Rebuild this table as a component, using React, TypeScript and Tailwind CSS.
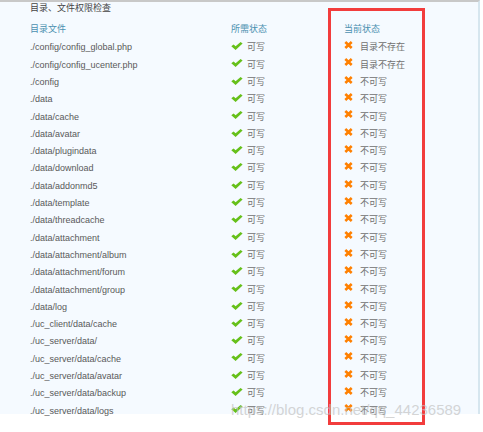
import React from "react";

const ROWS: { path: string; current: string }[] = [
  { path: "./config/config_global.php", current: "目录不存在" },
  { path: "./config/config_ucenter.php", current: "目录不存在" },
  { path: "./config", current: "不可写" },
  { path: "./data", current: "不可写" },
  { path: "./data/cache", current: "不可写" },
  { path: "./data/avatar", current: "不可写" },
  { path: "./data/plugindata", current: "不可写" },
  { path: "./data/download", current: "不可写" },
  { path: "./data/addonmd5", current: "不可写" },
  { path: "./data/template", current: "不可写" },
  { path: "./data/threadcache", current: "不可写" },
  { path: "./data/attachment", current: "不可写" },
  { path: "./data/attachment/album", current: "不可写" },
  { path: "./data/attachment/forum", current: "不可写" },
  { path: "./data/attachment/group", current: "不可写" },
  { path: "./data/log", current: "不可写" },
  { path: "./uc_client/data/cache", current: "不可写" },
  { path: "./uc_server/data/", current: "不可写" },
  { path: "./uc_server/data/cache", current: "不可写" },
  { path: "./uc_server/data/avatar", current: "不可写" },
  { path: "./uc_server/data/backup", current: "不可写" },
  { path: "./uc_server/data/logs", current: "不可写" },
];

const FONT = { fontFamily: '"Liberation Sans", "Noto Sans CJK SC", sans-serif' };

// bold green tick, sits a little above the text line
function Check() {
  return (
    <svg width="12" height="8" viewBox="0 0 12 8" className="shrink-0 -translate-y-[2px]">
      <path d="M0.3 4.2 L2.6 2.4 L4.6 4.3 L9.6 0 L11.6 1.6 L4.6 8 Z" fill="#66c01a" />
    </svg>
  );
}

// chunky orange cross
function Cross() {
  return (
    <svg width="9" height="8" viewBox="0 0 9 8" className="shrink-0 -translate-y-[3px]">
      <path d="M1.3 1 L7.7 7 M7.7 1 L1.3 7" stroke="#ff8000" strokeWidth="2.6" />
    </svg>
  );
}

export default function App() {
  return (
    <div className="relative h-[432px] w-[483px] overflow-hidden bg-white" style={FONT}>
      <div className="h-[414px] w-[480px] border-t-2 border-r-2 border-t-[#c8c8c8] border-r-[#d6e6ef] bg-[#f5faff]">
        <div className="pl-[30px] pt-[1px] text-[9px] leading-[11px] text-[#444]">目录、文件权限检查</div>
        <div className="mt-[8px] grid grid-cols-[201px_113px_1fr] pl-[30px] text-[9px] leading-[14px] text-[#4a90b0]">
          <span>目录文件</span>
          <span>所需状态</span>
          <span>当前状态</span>
        </div>
        <div className="mt-[3.5px]">
          {ROWS.map((row) => (
            <div
              key={row.path}
              className="grid h-[17.3px] grid-cols-[201px_113px_1fr] items-center pl-[30px] text-[9px] text-[#595959]"
            >
              <span>{row.path}</span>
              <span className="flex items-center gap-[4px]">
                <Check />
                <span className="text-[#707070]">可写</span>
              </span>
              <span className="flex items-center gap-[7px]">
                <Cross />
                <span className="text-[#707070]">{row.current}</span>
              </span>
            </div>
          ))}
        </div>
      </div>

      <div className="pointer-events-none absolute left-[328px] top-[8px] h-[417px] w-[97px] border-[3px] border-[#f23c3c]" />

      <div className="pointer-events-none absolute left-[231px] top-[401px] text-[15px] leading-[18px] text-[rgba(195,195,195,0.7)]">
        https://blog.csdn.net/qq_44236589
      </div>
    </div>
  );
}
